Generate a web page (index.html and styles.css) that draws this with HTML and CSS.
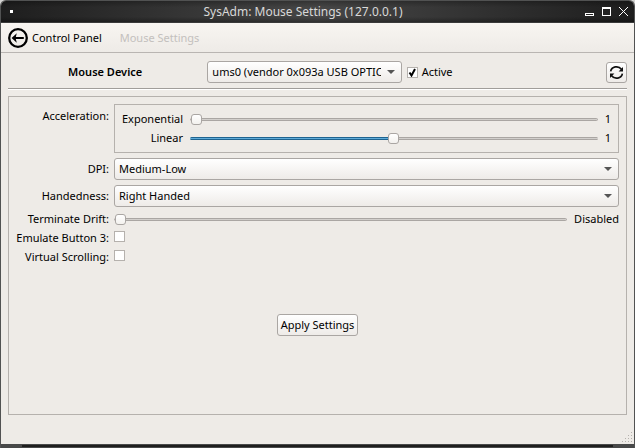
FILE: index.html
```html
<!DOCTYPE html>
<html lang="en">
<head>
<meta charset="utf-8">
<title>SysAdm: Mouse Settings (127.0.0.1)</title>
<link rel="stylesheet" href="styles.css">
</head>
<body>
<div class="window">
  <header class="titlebar">
    <span class="menu-dot"></span>
    <h1 class="title">SysAdm: Mouse Settings (127.0.0.1)</h1>
    <div class="window-buttons">
      <button type="button" aria-label="Minimize"><svg width="9" height="9" viewBox="0 0 9 9" shape-rendering="crispEdges"><path d="M.5 6.5h8v2h-8z"/></svg></button>
      <button type="button" aria-label="Maximize"><svg width="9" height="9" viewBox="0 0 9 9" shape-rendering="crispEdges"><path d="M.5 .5h8v8h-8zM0 1.5h9"/></svg></button>
      <button type="button" aria-label="Close"><svg width="9" height="9" viewBox="0 0 9 9"><path d="M0 0l9 9M9 0l-9 9"/></svg></button>
    </div>
  </header>

  <nav class="toolbar">
    <a class="back" href="#">
      <svg width="20" height="20" viewBox="0 0 20 20"><circle cx="10" cy="10" r="8.8" fill="none" stroke="#000" stroke-width="2.3"/><path d="M3.6 10l5.2-4.7-1 3.6h8v2.2h-8l1 3.6z"/></svg>
      <span>Control Panel</span>
    </a>
    <span class="current">Mouse Settings</span>
  </nav>

  <main class="content">
    <div class="device-row">
      <label class="device-label" for="device">Mouse Device</label>
      <select id="device"><option>ums0 (vendor 0x093a USB OPTICAL MOUSE)</option></select>
      <label class="active"><input type="checkbox" checked>Active</label>
      <button type="button" class="refresh" aria-label="Refresh">
        <svg width="15" height="15" viewBox="0 0 15 15"><path d="M1.6 6.4a6 5.6 0 0 1 10.8-2.2M13.4 8.6a6 5.6 0 0 1-10.8 2.2" fill="none" stroke="#111" stroke-width="1.7"/><path d="M14 2v4.4H9.6zM1 13V8.6h4.4z" fill="#111"/></svg>
      </button>
    </div>

    <form class="panel">
      <div class="form-grid">
        <span class="name name-top" id="accel">Acceleration:</span>
        <div class="group" role="group" aria-labelledby="accel">
          <label class="name" for="exp">Exponential</label>
          <input type="range" id="exp" min="0" max="100" value="0">
          <output for="exp">1</output>
          <label class="name" for="lin">Linear</label>
          <input type="range" id="lin" class="half" min="0" max="100" value="50">
          <output for="lin">1</output>
        </div>
        <label class="name" for="dpi">DPI:</label>
        <select id="dpi"><option>Medium-Low</option></select>
        <label class="name" for="hand">Handedness:</label>
        <select id="hand"><option>Right Handed</option></select>
        <label class="name" for="drift">Terminate Drift:</label>
        <div class="slider-row">
          <input type="range" id="drift" min="0" max="100" value="0">
          <output for="drift">Disabled</output>
        </div>
        <label class="name" for="emulate">Emulate Button 3:</label>
        <input type="checkbox" id="emulate">
        <label class="name" for="scroll">Virtual Scrolling:</label>
        <input type="checkbox" id="scroll">
      </div>
      <button type="button" class="apply">Apply Settings</button>
    </form>
  </main>

  <footer class="statusbar">
    <svg width="11" height="11" viewBox="0 0 11 11" shape-rendering="crispEdges"><path fill="#b5b1ad" d="M9 0h1v1H9zM6 3h1v1H6zM9 3h1v1H9zM3 6h1v1H3zM6 6h1v1H6zM9 6h1v1H9zM0 9h1v1H0zM3 9h1v1H3zM6 9h1v1H6zM9 9h1v1H9z"/></svg>
  </footer>
  <div class="frame-bottom"><span></span></div>
</div>
</body>
</html>
```
FILE: styles.css
```css
* {
  box-sizing: border-box;
}

body {
  margin: 0;
  background: #d4d4d2;
  color: #000;
  font: 11px/14px "Noto Sans", sans-serif;
}

button,
input,
select {
  margin: 0;
  color: inherit;
  font: inherit;
}

.window {
  display: flex;
  flex-direction: column;
  min-height: 100vh;
  border: 1px solid #515252;
  border-bottom: 0;
  border-radius: 6px 6px 0 0;
  background: #eeebe7;
  overflow: hidden;
}

.titlebar {
  display: flex;
  align-items: center;
  height: 22px;
  padding: 0 6px 0 9px;
  border-bottom: 1px solid #3a3a3a;
  background:
    linear-gradient(rgba(0, 0, 0, 0.25), transparent 30%, transparent 75%, rgba(0, 0, 0, 0.3)),
    linear-gradient(90deg, #1e1e1e, #464646 50%, #1e1e1e);
}

.menu-dot {
  width: 3px;
  height: 3px;
  margin-right: 8px;
  background: #fff;
}

.title {
  flex: 1;
  margin: 0;
  color: #d8d8d8;
  font-size: 12px;
  font-weight: 400;
  text-align: center;
}

.window-buttons {
  display: flex;
  justify-content: flex-end;
  gap: 8px;
}

.window-buttons button {
  display: flex;
  padding: 0;
  border: 0;
  background: none;
}

.window-buttons svg {
  fill: none;
  stroke: #fff;
}

.toolbar {
  display: flex;
  align-items: center;
  gap: 18px;
  height: 30px;
  padding: 0 7px;
  border-bottom: 1px solid #b9b5b2;
  background: linear-gradient(#f8f5f1, #eeebe7);
}

.back {
  display: flex;
  align-items: center;
  gap: 4px;
  color: #000;
  text-decoration: none;
}

.current {
  color: #c3c0bd;
}

.content {
  display: flex;
  flex: 1;
  flex-direction: column;
  padding: 8px 7px 0;
}

.device-row {
  display: grid;
  grid-template-columns: 1fr 1fr 1fr 21px;
  align-items: center;
  gap: 5px;
  padding-bottom: 5px;
  border-bottom: 1px solid #a09d9a;
  box-shadow: 0 1px #fff;
}

.device-label {
  font-weight: 600;
  text-align: center;
}

.active {
  display: flex;
  align-items: center;
  gap: 4px;
}

select {
  min-width: 0;
  width: 100%;
  height: 22px;
  padding: 0 20px 0 4px;
  appearance: none;
  border: 1px solid #aaa6a3;
  border-radius: 3px;
  background:
    url("data:image/svg+xml,%3Csvg xmlns='http://www.w3.org/2000/svg' width='8' height='4'%3E%3Cpath d='M0 0h8L4 4z' fill='%23555'/%3E%3C/svg%3E") no-repeat right 6px center,
    linear-gradient(#fff, #eeebe8);
}

input[type="checkbox"] {
  width: 11px;
  height: 11px;
  appearance: none;
  border: 1px solid #b5b1ad;
  background: #fff;
}

input[type="checkbox"]:checked {
  background: #fff url("data:image/svg+xml,%3Csvg xmlns='http://www.w3.org/2000/svg' width='9' height='9'%3E%3Cpath d='M1.5 4.5L3.5 7.5L7 1' fill='none' stroke='%23000' stroke-width='2'/%3E%3C/svg%3E") no-repeat center;
}

.refresh,
.apply {
  border: 1px solid #aaa6a3;
  border-radius: 3px;
  background: linear-gradient(#fff, #eeebe8);
}

.refresh {
  display: grid;
  place-items: center;
  height: 21px;
  padding: 0;
}

.panel {
  flex: 1;
  margin-top: 7px;
  padding: 7px;
  border: 1px solid #b5b1ad;
}

.form-grid {
  display: grid;
  grid-template-columns: 93px 1fr;
  align-items: center;
  gap: 5px;
}

.form-grid > input[type="checkbox"] {
  align-self: start;
}

.name {
  text-align: right;
  white-space: nowrap;
}

.name-top {
  align-self: start;
  padding-top: 5px;
}

.group {
  display: grid;
  grid-template-columns: auto 1fr auto;
  align-items: center;
  gap: 5px 7px;
  padding: 7px;
  border: 1px solid #b5b1ad;
}

.slider-row {
  display: flex;
  align-items: center;
  gap: 7px;
}

input[type="range"] {
  flex: 1;
  min-width: 0;
  height: 11px;
  appearance: none;
  background: none;
}

input[type="range"]::-webkit-slider-runnable-track {
  height: 3px;
  border: 1px solid #aaa6a3;
  border-radius: 2px;
  background: #d2cfcc;
}

input[type="range"].half::-webkit-slider-runnable-track {
  border: 0;
  background:
    linear-gradient(#1f6490 1px, #60acd9 1px, #60acd9 2px, #1f6490 2px) left / 50% 100% no-repeat,
    linear-gradient(#aaa6a3 1px, #d2cfcc 1px, #d2cfcc 2px, #aaa6a3 2px);
}

input[type="range"]::-webkit-slider-thumb {
  width: 11px;
  height: 11px;
  margin-top: -5px;
  appearance: none;
  border: 1px solid #aaa6a3;
  border-radius: 3px;
  background: linear-gradient(#fff, #f3f1ee);
}

input[type="range"].half::-webkit-slider-thumb {
  margin-top: -4px;
}

.apply {
  display: block;
  height: 22px;
  margin: 50px auto 0;
  padding: 0 3px;
}

.statusbar {
  display: flex;
  align-items: flex-end;
  justify-content: flex-end;
  height: 29px;
  padding: 0 1px 1px;
}

.frame-bottom {
  height: 4px;
  padding: 1px 21px;
  background: #484949;
}

.frame-bottom span {
  display: block;
  height: 2px;
  background: #1e1e1e;
}
```
